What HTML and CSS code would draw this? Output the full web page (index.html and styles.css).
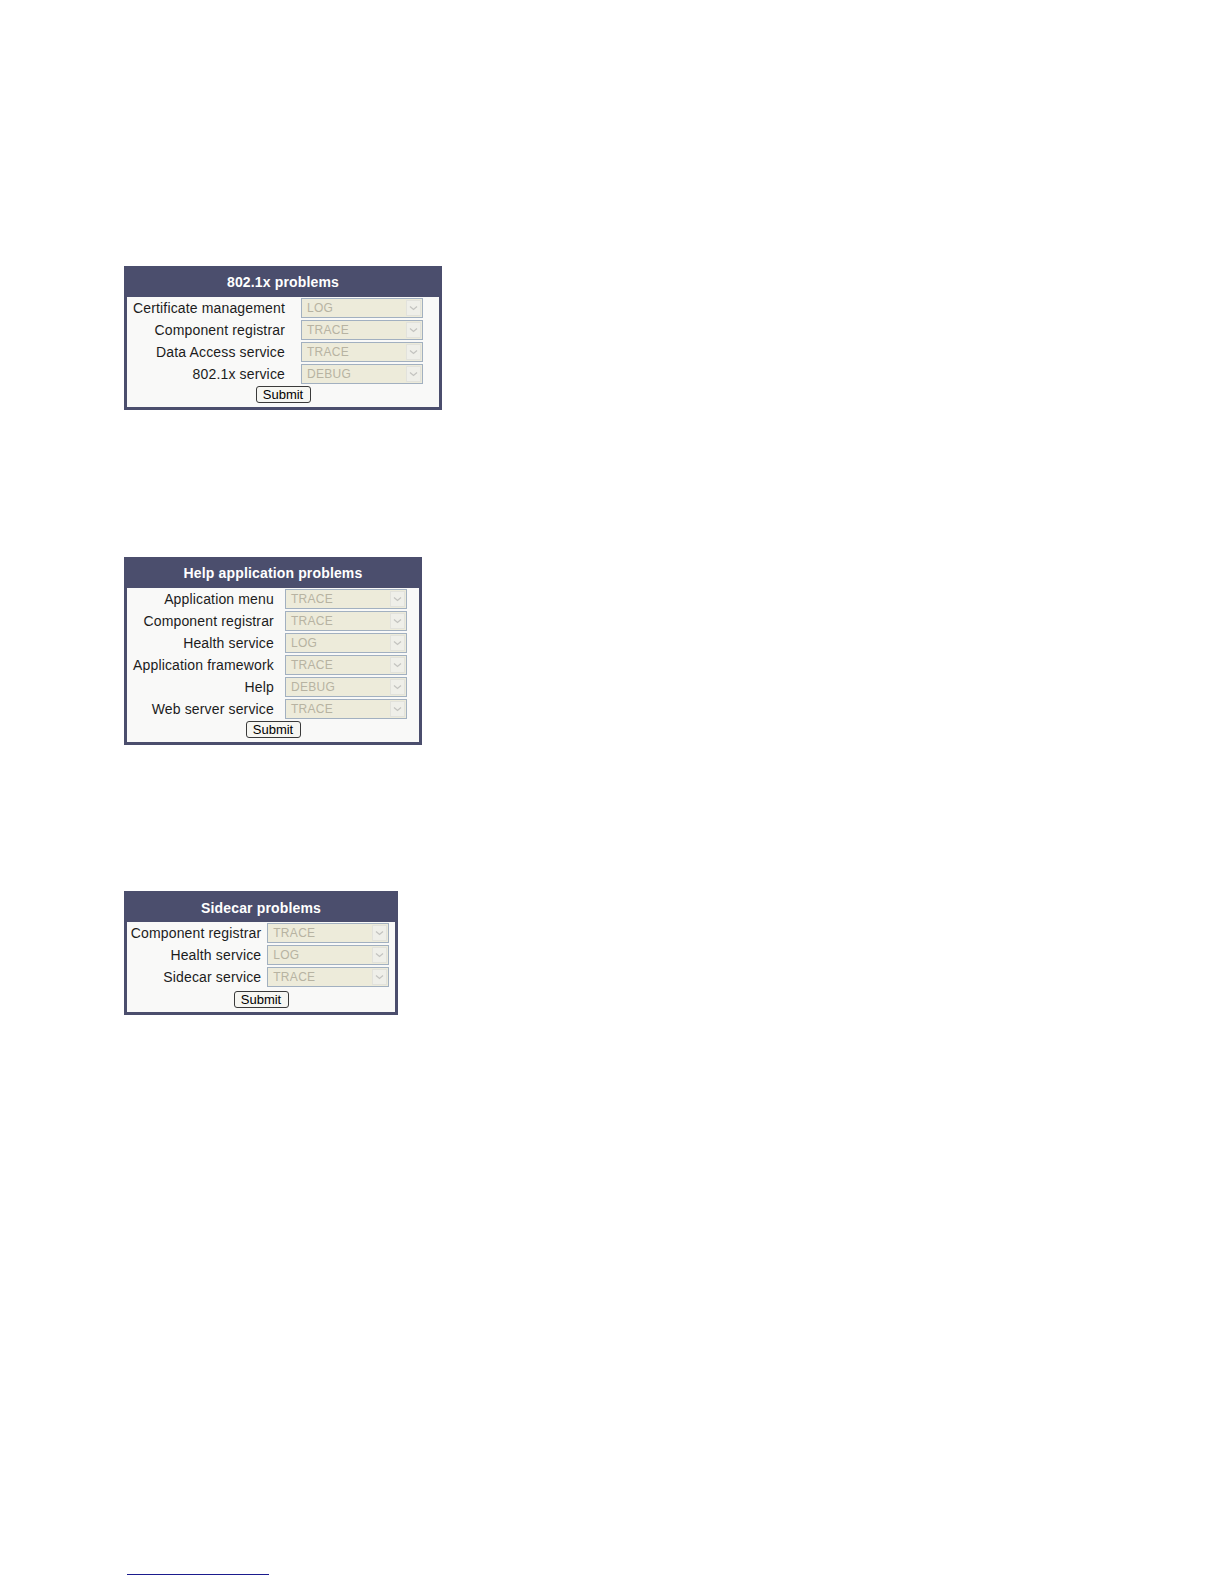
FILE: index.html
```html
<!DOCTYPE html>
<html>
<head>
<meta charset="utf-8">
<title>Problems</title>
<link rel="stylesheet" href="styles.css">
</head>
<body>
<div class="page">
  <div class="panel panel-8021x">
    <div class="panel-title">802.1x problems</div>
    <div class="panel-body">
      <div class="form-grid">
        <div class="label">Certificate management</div>
        <div class="select"><span class="select-value">LOG</span><span class="select-arrow"><svg width="9" height="6" viewBox="0 0 9 6"><path d="M1 1.5 L4.5 4.5 L8 1.5" fill="none" stroke="#c4c4c0" stroke-width="1.3"/></svg></span></div>
        <div class="label">Component registrar</div>
        <div class="select"><span class="select-value">TRACE</span><span class="select-arrow"><svg width="9" height="6" viewBox="0 0 9 6"><path d="M1 1.5 L4.5 4.5 L8 1.5" fill="none" stroke="#c4c4c0" stroke-width="1.3"/></svg></span></div>
        <div class="label">Data Access service</div>
        <div class="select"><span class="select-value">TRACE</span><span class="select-arrow"><svg width="9" height="6" viewBox="0 0 9 6"><path d="M1 1.5 L4.5 4.5 L8 1.5" fill="none" stroke="#c4c4c0" stroke-width="1.3"/></svg></span></div>
        <div class="label">802.1x service</div>
        <div class="select"><span class="select-value">DEBUG</span><span class="select-arrow"><svg width="9" height="6" viewBox="0 0 9 6"><path d="M1 1.5 L4.5 4.5 L8 1.5" fill="none" stroke="#c4c4c0" stroke-width="1.3"/></svg></span></div>
      </div>
      <div class="submit-row"><button class="submit" type="button">Submit</button></div>
    </div>
  </div>

  <div class="panel panel-help">
    <div class="panel-title">Help application problems</div>
    <div class="panel-body">
      <div class="form-grid">
        <div class="label">Application menu</div>
        <div class="select"><span class="select-value">TRACE</span><span class="select-arrow"><svg width="9" height="6" viewBox="0 0 9 6"><path d="M1 1.5 L4.5 4.5 L8 1.5" fill="none" stroke="#c4c4c0" stroke-width="1.3"/></svg></span></div>
        <div class="label">Component registrar</div>
        <div class="select"><span class="select-value">TRACE</span><span class="select-arrow"><svg width="9" height="6" viewBox="0 0 9 6"><path d="M1 1.5 L4.5 4.5 L8 1.5" fill="none" stroke="#c4c4c0" stroke-width="1.3"/></svg></span></div>
        <div class="label">Health service</div>
        <div class="select"><span class="select-value">LOG</span><span class="select-arrow"><svg width="9" height="6" viewBox="0 0 9 6"><path d="M1 1.5 L4.5 4.5 L8 1.5" fill="none" stroke="#c4c4c0" stroke-width="1.3"/></svg></span></div>
        <div class="label">Application framework</div>
        <div class="select"><span class="select-value">TRACE</span><span class="select-arrow"><svg width="9" height="6" viewBox="0 0 9 6"><path d="M1 1.5 L4.5 4.5 L8 1.5" fill="none" stroke="#c4c4c0" stroke-width="1.3"/></svg></span></div>
        <div class="label">Help</div>
        <div class="select"><span class="select-value">DEBUG</span><span class="select-arrow"><svg width="9" height="6" viewBox="0 0 9 6"><path d="M1 1.5 L4.5 4.5 L8 1.5" fill="none" stroke="#c4c4c0" stroke-width="1.3"/></svg></span></div>
        <div class="label">Web server service</div>
        <div class="select"><span class="select-value">TRACE</span><span class="select-arrow"><svg width="9" height="6" viewBox="0 0 9 6"><path d="M1 1.5 L4.5 4.5 L8 1.5" fill="none" stroke="#c4c4c0" stroke-width="1.3"/></svg></span></div>
      </div>
      <div class="submit-row"><button class="submit" type="button">Submit</button></div>
    </div>
  </div>

  <div class="panel panel-sidecar">
    <div class="panel-title">Sidecar problems</div>
    <div class="panel-body">
      <div class="form-grid">
        <div class="label">Component registrar</div>
        <div class="select"><span class="select-value">TRACE</span><span class="select-arrow"><svg width="9" height="6" viewBox="0 0 9 6"><path d="M1 1.5 L4.5 4.5 L8 1.5" fill="none" stroke="#c4c4c0" stroke-width="1.3"/></svg></span></div>
        <div class="label">Health service</div>
        <div class="select"><span class="select-value">LOG</span><span class="select-arrow"><svg width="9" height="6" viewBox="0 0 9 6"><path d="M1 1.5 L4.5 4.5 L8 1.5" fill="none" stroke="#c4c4c0" stroke-width="1.3"/></svg></span></div>
        <div class="label">Sidecar service</div>
        <div class="select"><span class="select-value">TRACE</span><span class="select-arrow"><svg width="9" height="6" viewBox="0 0 9 6"><path d="M1 1.5 L4.5 4.5 L8 1.5" fill="none" stroke="#c4c4c0" stroke-width="1.3"/></svg></span></div>
      </div>
      <div class="submit-row"><button class="submit" type="button">Submit</button></div>
    </div>
  </div>

  <div class="footnote-rule"></div>
</div>
</body>
</html>
```
FILE: styles.css
```css
html, body {
  margin: 0;
  padding: 0;
  background: #ffffff;
}

.page {
  box-sizing: border-box;
  width: 1224px;
  height: 1584px;
  padding-top: 266px;
  padding-left: 124px;
  display: flex;
  flex-direction: column;
  align-items: flex-start;
  font-family: "Liberation Sans", Arial, sans-serif;
}

.panel {
  box-sizing: border-box;
  background: #4b4e6d;
  border: 3px solid #4b4e6d;
  border-top: 0;
}

.panel-8021x { width: 318px; }
.panel-help { width: 298px; margin-top: 147px; }
.panel-sidecar { width: 274px; margin-top: 146px; }

.panel-title {
  height: 31px;
  display: flex;
  align-items: center;
  justify-content: center;
  color: #ffffff;
  font-family: "Liberation Sans", Arial, sans-serif;
  font-weight: bold;
  font-size: 14px;
  letter-spacing: 0.15px;
}

.panel-sidecar .panel-title {
  padding-top: 2px;
  height: 29px;
}

.panel-body {
  background: #f9f9f8;
  padding: 1px 0 4px;
}

.form-grid {
  display: grid;
  grid-template-columns: auto 122px;
  grid-auto-rows: 22px;
  column-gap: 11px;
  justify-content: center;
}

.panel-8021x .form-grid { column-gap: 16px; padding-right: 10px; }
.panel-help .form-grid { padding-right: 6px; }
.panel-sidecar .form-grid { column-gap: 6px; padding-right: 2px; }

.label {
  height: 20px;
  display: flex;
  align-items: center;
  justify-content: flex-end;
  font-size: 14px;
  letter-spacing: 0.15px;
  color: #1c1c1c;
  white-space: nowrap;
}

.select {
  box-sizing: border-box;
  height: 20px;
  border: 1px solid #a2b0c0;
  background: #edebda;
  display: flex;
  align-items: center;
  justify-content: space-between;
  padding-left: 5px;
  padding-right: 1px;
}

.select-value {
  font-size: 12px;
  color: #b7b3a2;
  letter-spacing: 0.3px;
}

.select-arrow {
  box-sizing: border-box;
  width: 15px;
  height: 16px;
  background: #efefe9;
  border: 1px solid #e2e2dc;
  display: flex;
  align-items: center;
  justify-content: center;
}

.submit-row {
  display: flex;
  justify-content: center;
}

.panel-sidecar .submit-row { padding-top: 2px; }

.submit {
  box-sizing: border-box;
  width: 55px;
  height: 17px;
  padding: 0;
  margin: 0;
  border: 1px solid #3a3a3a;
  border-radius: 3px;
  background: #f6f6f2;
  font-family: "Liberation Sans", Arial, sans-serif;
  font-size: 13px;
  color: #000000;
  line-height: 15px;
}

.footnote-rule {
  margin-top: 559px;
  margin-left: 3px;
  width: 142px;
  height: 1px;
  background: #1b1b8e;
}
```
